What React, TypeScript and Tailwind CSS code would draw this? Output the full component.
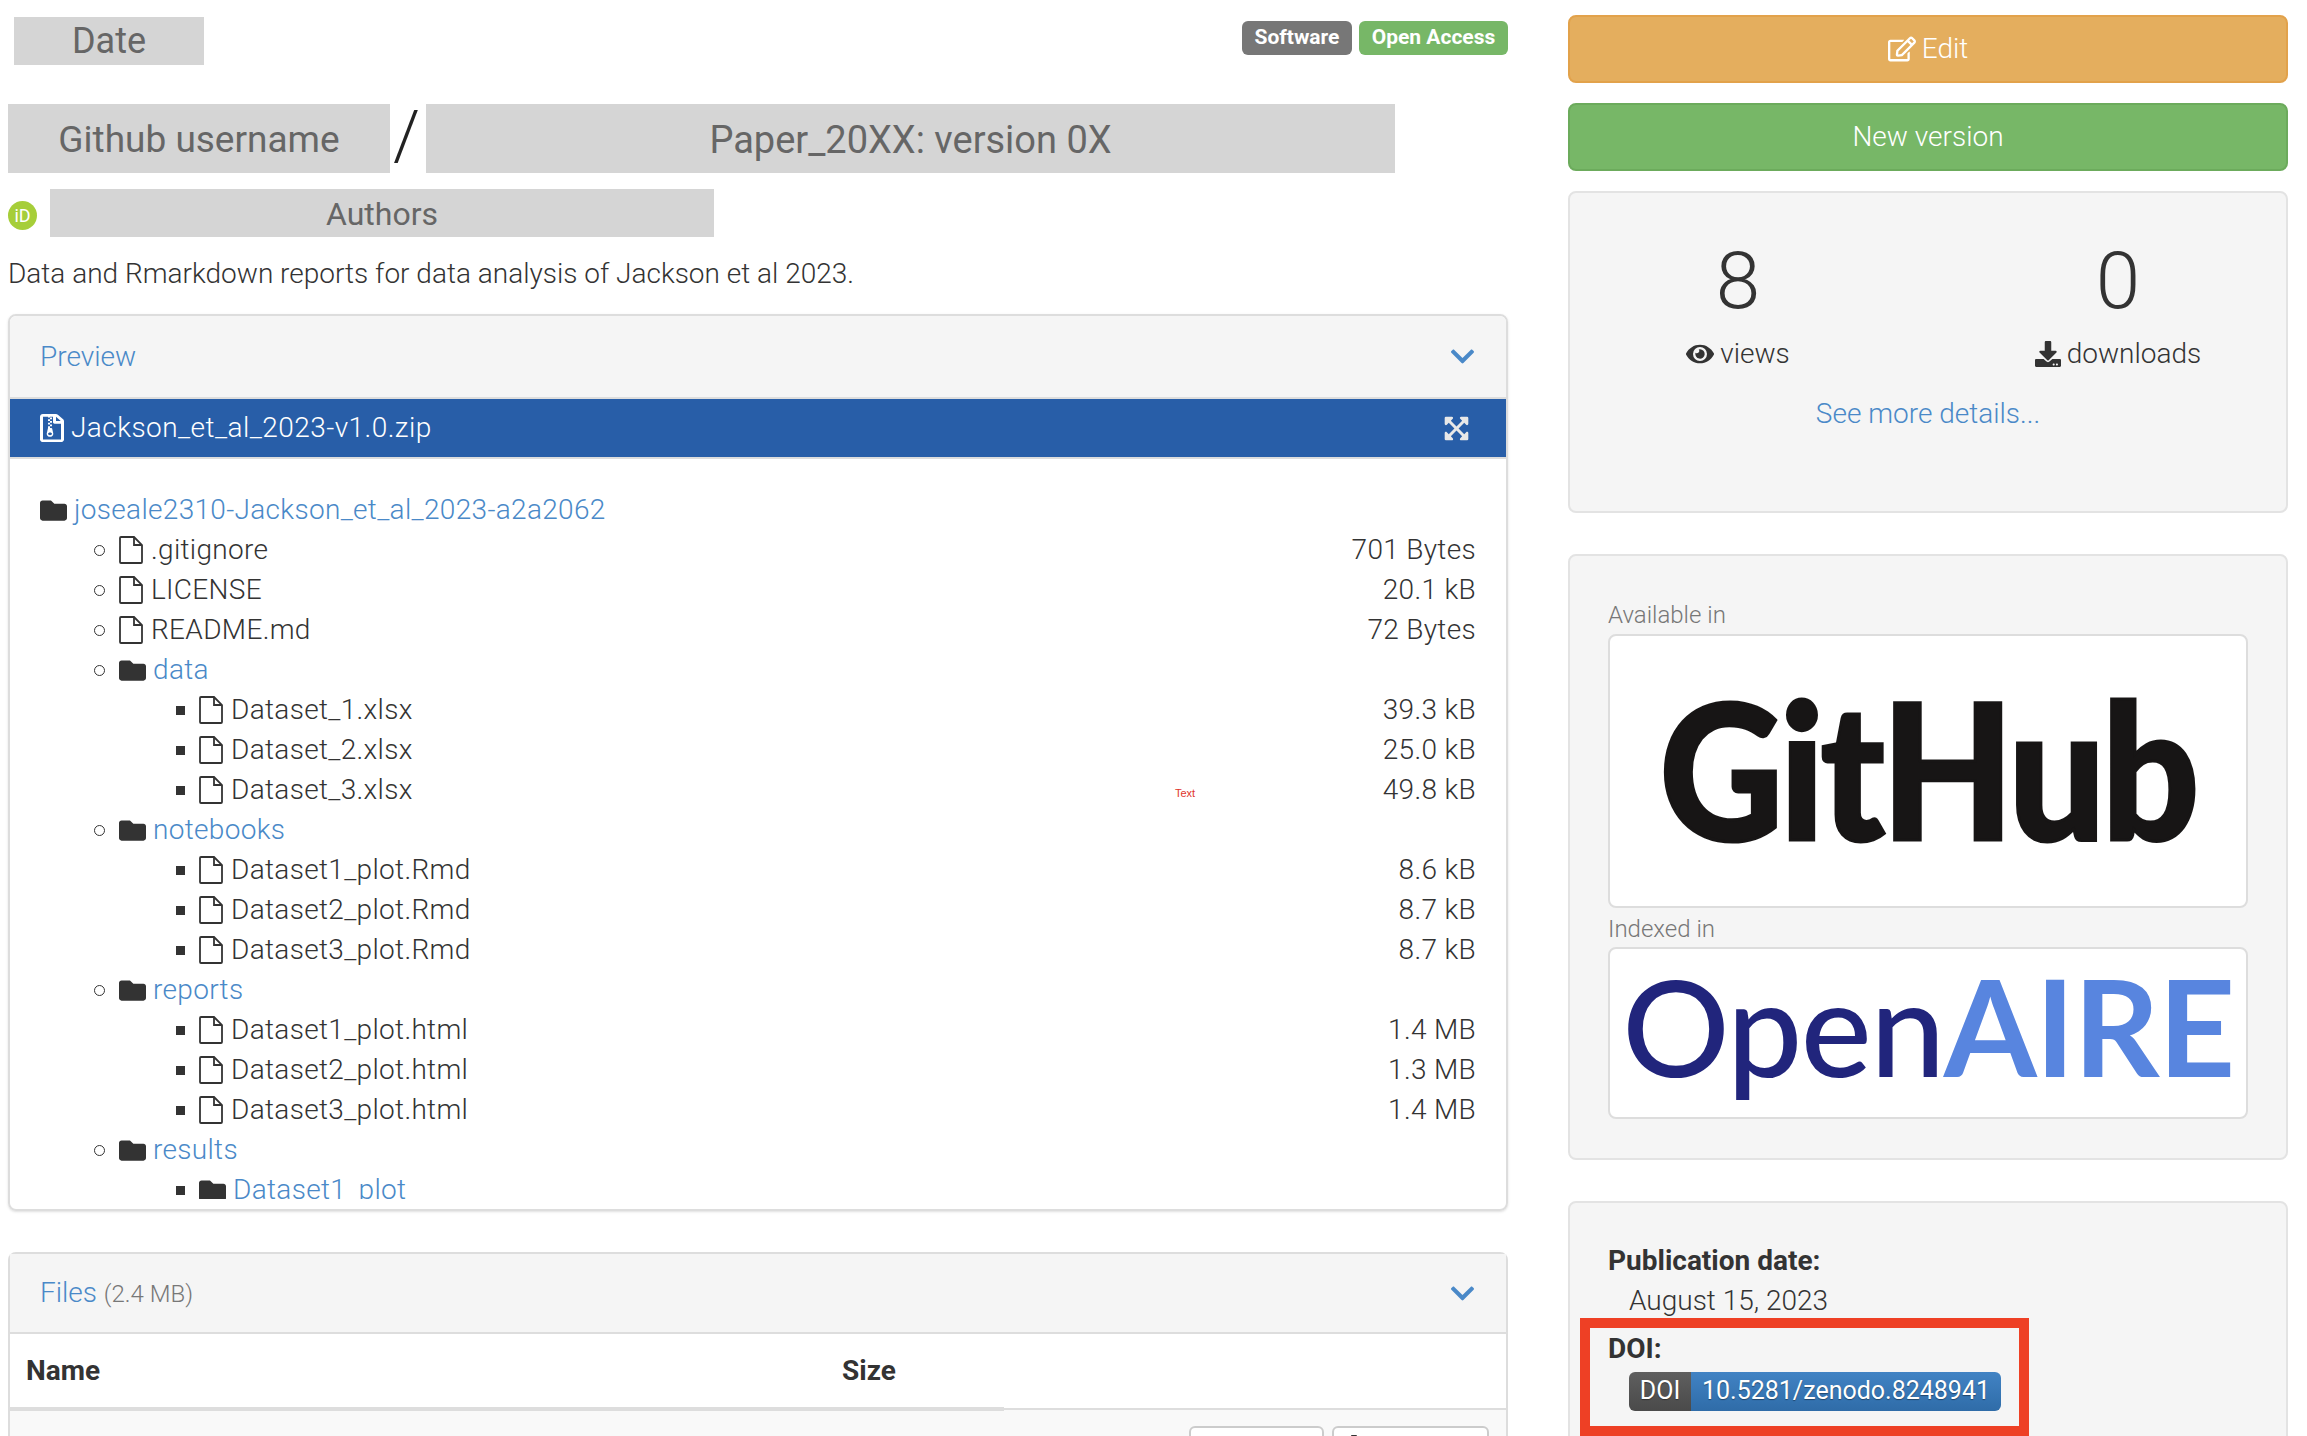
import { FaChevronDown, FaDownload, FaExpandArrowsAlt, FaEye, FaFolder, FaRegEdit, FaRegFileArchive } from 'react-icons/fa';

type TreeRow = { name: string; level: 0 | 1 | 2; folder?: boolean; size?: string };

const tree: TreeRow[] = [
  { name: 'joseale2310-Jackson_et_al_2023-a2a2062', level: 0, folder: true },
  { name: '.gitignore', level: 1, size: '701 Bytes' },
  { name: 'LICENSE', level: 1, size: '20.1 kB' },
  { name: 'README.md', level: 1, size: '72 Bytes' },
  { name: 'data', level: 1, folder: true },
  { name: 'Dataset_1.xlsx', level: 2, size: '39.3 kB' },
  { name: 'Dataset_2.xlsx', level: 2, size: '25.0 kB' },
  { name: 'Dataset_3.xlsx', level: 2, size: '49.8 kB' },
  { name: 'notebooks', level: 1, folder: true },
  { name: 'Dataset1_plot.Rmd', level: 2, size: '8.6 kB' },
  { name: 'Dataset2_plot.Rmd', level: 2, size: '8.7 kB' },
  { name: 'Dataset3_plot.Rmd', level: 2, size: '8.7 kB' },
  { name: 'reports', level: 1, folder: true },
  { name: 'Dataset1_plot.html', level: 2, size: '1.4 MB' },
  { name: 'Dataset2_plot.html', level: 2, size: '1.3 MB' },
  { name: 'Dataset3_plot.html', level: 2, size: '1.4 MB' },
  { name: 'results', level: 1, folder: true },
  { name: 'Dataset1_plot', level: 2, folder: true },
];

// thin file-o outline, the one in the icon packages is too heavy
function FileIcon() {
  return (
    <svg viewBox="0 0 24 28" className="mr-[8px] h-[28px] w-[24px] shrink-0 text-[#333]" fill="none" stroke="currentColor" strokeWidth="1.8">
      <path d="M2 1 H15 L23 9 V26 a1 1 0 0 1 -1 1 H2 a1 1 0 0 1 -1 -1 V2 a1 1 0 0 1 1 -1 z" />
      <path d="M15 1.5 V9 H22.5" />
    </svg>
  );
}

function TreeItem({ row }: { row: TreeRow }) {
  return (
    <div className="flex h-10 shrink-0 items-center justify-between">
      <div className="flex items-center">
        {row.level === 1 && <span className="ml-[54px] mr-[14px] h-[11px] w-[11px] rounded-full border border-[#333]" />}
        {row.level === 2 && <span className="ml-[136px] mr-[14px] h-[9px] w-[9px] bg-[#333]" />}
        {row.folder ? (
          <FaFolder className="mr-[7px] h-[27px] w-[27px] shrink-0 text-[#333]" />
        ) : (
          <FileIcon />
        )}
        <span className={row.folder ? 'text-[#4a89c8]' : 'text-[#333]'}>{row.name}</span>
      </div>
      {row.size && <span className="text-[#333]">{row.size}</span>}
    </div>
  );
}

function PanelHeader({ children, className }: { children: React.ReactNode; className: string }) {
  return (
    <div className={'flex items-center justify-between border-b-2 border-[#ddd] bg-[#f5f5f5] pl-[30px] pr-[30px] ' + className}>
      <div className="text-[#4a89c8]">{children}</div>
      <FaChevronDown className="h-[27px] w-[27px] text-[#4a89c8]" />
    </div>
  );
}

export default function App() {
  return (
    <div className="relative flex h-[1436px] w-[2307px] overflow-hidden bg-white font-[Roboto,sans-serif] text-[28px] font-light leading-10 text-[#333]">
      {/* main column */}
      <div className="ml-2 w-[1500px] shrink-0">
        <div className="flex h-[65px] items-start justify-between">
          <div className="ml-[6px] mt-[17px] flex h-[48px] w-[190px] items-center justify-center bg-[#d5d5d5] text-[36px] font-normal text-[#666]">
            Date
          </div>
          <div className="mt-[21px] flex gap-[7px] text-[21px] font-bold leading-[30px] text-white">
            <span className="flex h-[34px] w-[110px] items-center justify-center rounded-md bg-[#777] pb-[2px]">Software</span>
            <span className="flex h-[34px] w-[149px] items-center justify-center rounded-md bg-[#77b767] pb-[2px]">Open Access</span>
          </div>
        </div>

        <div className="mt-[39px] flex h-[69px] items-center">
          <div className="flex h-full w-[382px] items-center justify-center bg-[#d5d5d5] pt-[2px] text-[37px] font-normal text-[#666]">
            Github username
          </div>
          <span className="mb-[6px] ml-[3px] w-[33px] text-[68px] font-light leading-none text-[#222]">/</span>
          <div className="flex h-full w-[969px] items-center justify-center bg-[#d5d5d5] pt-[2px] text-[38px] font-normal text-[#666]">
            Paper_20XX: version 0X
          </div>
        </div>

        <div className="mt-4 flex h-[48px] items-center">
          <span className="mt-[5px] flex h-[29px] w-[29px] items-center justify-center rounded-full bg-[#a6ce39] text-[18px] font-normal text-white">
            iD
          </span>
          <div className="ml-[13px] flex h-full w-[664px] items-center justify-center bg-[#d5d5d5] pt-[2px] text-[32px] font-normal text-[#666]">
            Authors
          </div>
        </div>

        <p className="mt-4 h-10 pt-[1px]">Data and Rmarkdown reports for data analysis of Jackson et al 2023.</p>

        <section className="mt-[21px] h-[897px] overflow-hidden rounded-lg border-2 border-[#ddd] shadow-sm">
          <PanelHeader className="h-[83px]">Preview</PanelHeader>
          <div className="flex h-[60px] items-center justify-between border-b-2 border-[#ddd] bg-[#285ea8] pl-[30px] pr-[36px] text-white">
            <div className="flex items-center gap-[7px] tracking-[0.45px]">
              <FaRegFileArchive className="h-[28px] w-[24px]" preserveAspectRatio="none" />
              Jackson_et_al_2023-v1.0.zip
            </div>
            <FaExpandArrowsAlt className="h-[27px] w-[27px] text-[#e8e8e8]" />
          </div>
          <div className="ml-[30px] mr-[30px] mt-[31px] flex h-[709px] flex-col overflow-hidden tracking-[0.32px]">
            {tree.map(row => (
              <TreeItem key={row.name + row.level} row={row} />
            ))}
          </div>
        </section>

        <section className="mt-[41px] h-[300px] rounded-t-lg border-2 border-b-0 border-[#ddd]">
          <PanelHeader className="h-[80px]">
            Files <span className="text-[24px] text-[#777]">(2.4 MB)</span>
          </PanelHeader>
          <div className="relative flex h-[76px] items-center border-b-2 border-[#ddd] font-bold">
            <span className="ml-[16px] w-[816px]">Name</span>
            <span>Size</span>
            <span className="absolute -bottom-[3px] left-0 h-[4px] w-[994px] bg-[#ddd]" />
          </div>
          <div className="flex h-[60px] items-start bg-[#f9f9f9]">
            <span className="ml-[16px] mt-[19px] w-[820px] text-[#4a89c8]">joseale2310/Jackson_et_al_2023-v1.0.zip</span>
            <span className="mt-[19px]">2.4 MB</span>
            <div className="ml-auto mr-[17px] mt-[16px] flex gap-[8px] text-[24px] font-normal">
              <span className="flex h-12 w-[135px] items-center justify-center rounded-md border-2 border-[#ccc] bg-white">Preview</span>
              <span className="flex h-12 w-[157px] items-start justify-center gap-[6px] rounded-md border-2 border-[#ccc] bg-white pt-[7px]">
                <FaDownload className="h-[24px] w-[24px]" />
                Download
              </span>
            </div>
          </div>
        </section>
      </div>

      {/* sidebar */}
      <aside className="ml-[60px] w-[720px] shrink-0 pt-[15px]">
        <div className="flex h-[68px] items-center justify-center gap-[6px] rounded-lg border-2 border-[#e2a24b] bg-[#e4ae5e] text-white">
          <FaRegEdit className="h-[28px] w-[28px]" />
          Edit
        </div>
        <div className="mt-5 flex h-[68px] items-center justify-center rounded-lg border-2 border-[#6cab5c] bg-[#77b767] text-white">
          New version
        </div>

        <div className="mt-5 h-[322px] rounded-lg border-2 border-[#e3e3e3] bg-[#f5f5f5]">
          <div className="mt-[40px] flex justify-center">
            <div className="flex w-[380px] shrink-0 flex-col items-center">
              <span className="text-[80px] leading-[96px]">8</span>
              <span className="mt-[5px] flex items-center gap-[6px]">
                <FaEye className="h-[28px] w-[28px]" /> views
              </span>
            </div>
            <div className="flex w-[380px] shrink-0 flex-col items-center">
              <span className="text-[80px] leading-[96px]">0</span>
              <span className="mt-[5px] flex items-center gap-[6px]">
                <FaDownload className="h-[26px] w-[26px]" /> downloads
              </span>
            </div>
          </div>
          <div className="mt-5 text-center text-[#4a89c8]">See more details...</div>
        </div>

        <div className="mt-[41px] h-[606px] rounded-lg border-2 border-[#e3e3e3] bg-[#f5f5f5] px-[38px] pt-[41px]">
          <div className="text-[24px] leading-[36px] text-[#777]">Available in</div>
          <div className="mt-[1px] flex h-[274px] items-center justify-center overflow-hidden rounded-lg border-2 border-[#ddd] bg-white pb-[9px]">
            <span className="scale-x-[0.91] font-[Lato,sans-serif] text-[188px] font-black leading-none tracking-[-4px] text-[#171515] [-webkit-text-stroke:3px_#171515]">
              GitHub
            </span>
          </div>
          <div className="mt-[3px] text-[24px] leading-[36px] text-[#777]">Indexed in</div>
          <div className="flex h-[172px] items-center justify-center overflow-hidden rounded-lg border-2 border-[#ddd] bg-white pb-[14px]">
            <span className="font-[Lato,sans-serif] text-[134px] font-medium leading-none tracking-[-1.5px] text-[#21257c]">
              Open<span className="font-bold text-[#5885df]">AIRE</span>
            </span>
          </div>
        </div>

        <div className="mt-[41px] h-[300px] rounded-lg border-2 border-[#e3e3e3] bg-[#f5f5f5] pl-[38px] pt-[38px]">
          <div className="font-bold">Publication date:</div>
          <div className="pl-[21px]">August 15, 2023</div>
          <div className="mt-[8px] font-bold">DOI:</div>
          <div className="ml-[21px] mt-[3px] flex h-[39px] w-[372px] overflow-hidden rounded-md text-[25px] font-normal leading-[38px] text-white [text-shadow:0_1px_1px_rgba(0,0,0,0.4)]">
            <span className="w-[62px] bg-gradient-to-b from-[#5f5f5f] to-[#4a4a4a] text-center">DOI</span>
            <span className="flex-1 bg-gradient-to-b from-[#4183c4] to-[#2f6ca8] text-center">10.5281/zenodo.8248941</span>
          </div>
        </div>
      </aside>

      {/* annotations pasted over the screenshot */}
      <span className="absolute left-[1175px] top-[786px] font-[Liberation_Sans,sans-serif] text-[11px] font-normal leading-[14px] text-[#e0352b]">Text</span>
      <div className="absolute left-[1580px] top-[1318px] h-[118px] w-[449px] border-[10px] border-[#ee4025]" />
    </div>
  );
}
